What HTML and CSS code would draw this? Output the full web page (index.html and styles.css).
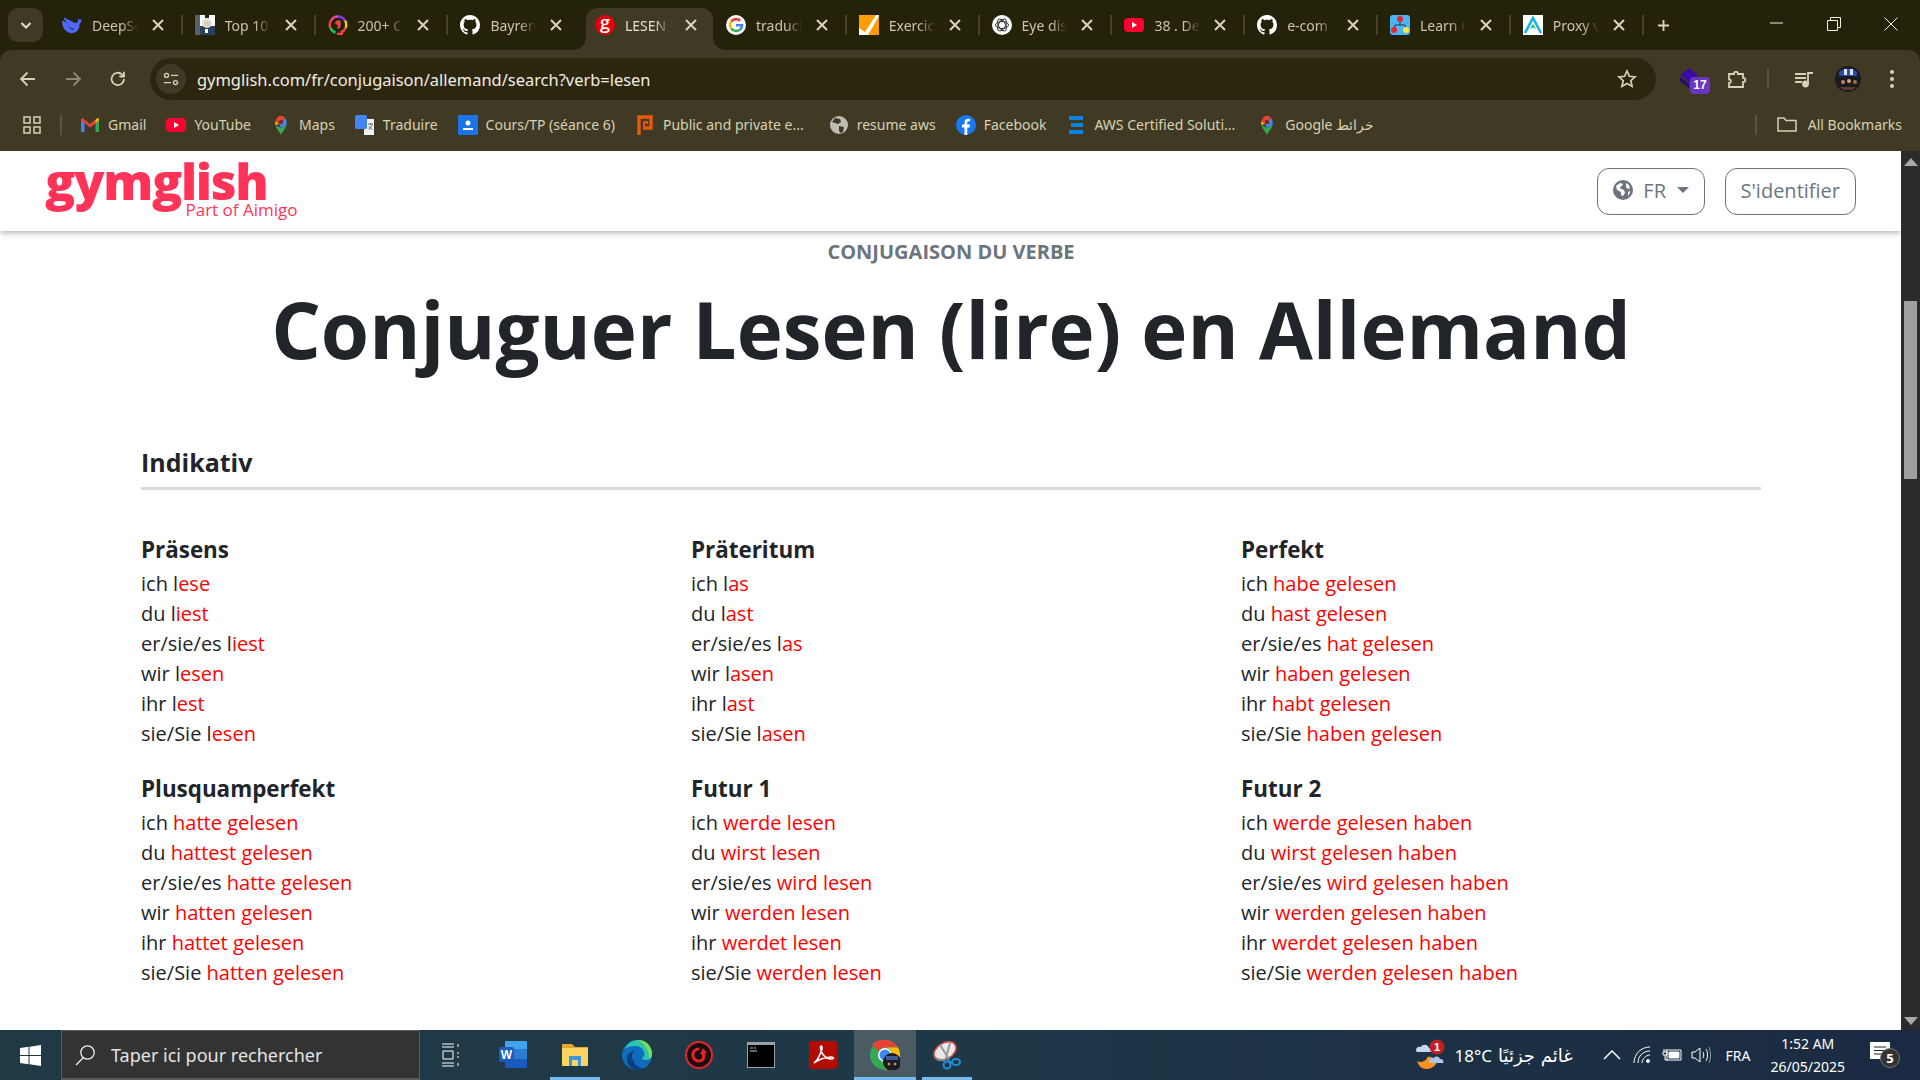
FILE: index.html
```html
<!DOCTYPE html>
<html lang="fr">
<head>
    <meta charset="UTF-8">
    <meta name="viewport" content="width=device-width, initial-scale=1.0">
    <title>LESEN</title>
    <link rel="stylesheet" href="styles.css">
</head>
<body>
    <svg class="sprite" aria-hidden="true">
        <symbol id="i-github" viewBox="0 0 16 16"><circle cx="8" cy="8" r="8" fill="#25220a"/><path fill="#fff" d="M8 0C3.58 0 0 3.58 0 8c0 3.54 2.29 6.53 5.47 7.59.4.07.55-.17.55-.38 0-.19-.01-.82-.01-1.49-2.01.37-2.53-.49-2.69-.94-.09-.23-.48-.94-.82-1.13-.28-.15-.68-.52-.01-.53.63-.01 1.08.58 1.23.82.72 1.21 1.87.87 2.33.66.07-.52.28-.87.51-1.07-1.78-.2-3.64-.89-3.64-3.95 0-.87.31-1.59.82-2.15-.08-.2-.36-1.02.08-2.12 0 0 .67-.21 2.2.82.64-.18 1.32-.27 2-.27.68 0 1.36.09 2 .27 1.53-1.04 2.2-.82 2.2-.82.44 1.1.16 1.92.08 2.12.51.56.82 1.27.82 2.15 0 3.07-1.87 3.75-3.65 3.95.29.25.54.73.54 1.48 0 1.07-.01 1.93-.01 2.2 0 .21.15.46.55.38A8.013 8.013 0 0016 8c0-4.42-3.58-8-8-8z"/></symbol>
        <symbol id="i-yt" viewBox="0 0 20 20"><rect x="0" y="3" width="20" height="14" rx="4" fill="#ff0033"/><path fill="#fff" d="M8 7l5 3-5 3z"/></symbol>
        <symbol id="i-maps" viewBox="0 0 20 20"><path fill="#34a853" d="M10 20c-1-3-5-6.500-5.500-10L10 13l5.500-3C15 13.500 11 17 10 20z"/><path fill="#fbbc04" d="M4.500 10C4 8.500 4 7.500 4.500 6L8 9z"/><path fill="#4285f4" d="M15.500 10C16 7 15.500 5 14 3l-6 6 2 4z"/><path fill="#ea4335" d="M14 3C11.500 -.5 6.500 -.5 4.500 6L8 9z"/><circle cx="10" cy="7" r="2.200" fill="#7a2a1c"/></symbol>
        <symbol id="i-fb" viewBox="0 0 20 20"><circle cx="10" cy="10" r="10" fill="#1877f2"/><path fill="#fff" d="M8.500 20v-7.500H6V9.500h2.500V7.500c0-2.500 1.500-3.800 3.700-3.800 1 0 1.900.1 1.900.1v2.500h-1.200c-1.200 0-1.600.8-1.600 1.500v1.700h2.700l-.4 3h-2.300V20z"/></symbol>
    </svg>

    <div class="tabstrip">
        <button class="tabs-menu" aria-label="Onglets">
            <svg class="ico14" viewBox="0 0 14 14"><path d="M2.500 5l4.500 4.500L11.500 5" fill="none" stroke="#e6e2c8" stroke-width="2"/></svg>
        </button>
        <div class="tab">
            <svg class="fav" viewBox="0 0 20 20"><path fill="#4d6bfe" d="M19.500 4c-.8.500-1.300.3-2 .8-.4-.6-.9-1-1.700-1 .3 1 .2 1.500.2 2.200C15 9 13 8 11 7 8 5.500 5 4 3 2.800 2.500 2.500 2 3 2 3.500c.5 2 2 3 4 4.700-1.500-.5-3-1.200-4.800-2.400C.500 5.500.200 6 .200 6.500c0 1 .3 5 2.300 7.800 2 2.500 5 4.200 8 3.800 3-.3 5-2 6-4.300 1-1.800 1-3.500 1-5 .8-.3 1.800-1.500 2-4.800z"/><path fill="#25220a" d="M6 11c2 1.800 4.500 3 7 2.500-1.800 2-5 1-7-2.500z"/></svg>
            <span class="tab-title">DeepSe</span>
            <svg class="tab-x" viewBox="0 0 14 14"><path d="M2 2l10 10M12 2L2 12"/></svg>
            <i class="tab-sep"></i>
        </div>
        <div class="tab">
            <svg class="fav" viewBox="0 0 20 20"><rect width="20" height="20" fill="#fff"/><rect width="5" height="20" fill="#5b5f63"/><rect x="5" y="11" width="15" height="9" fill="#27415e"/><circle cx="12" cy="8" r="5" fill="#dfe3e6"/><circle cx="12" cy="9" r="3" fill="#e9c8ad"/><rect x="10" y="0" width="4" height="3" fill="#222"/><rect x="10" y="14" width="3" height="4" fill="#fff"/></svg>
            <span class="tab-title">Top 10</span>
            <svg class="tab-x" viewBox="0 0 14 14"><path d="M2 2l10 10M12 2L2 12"/></svg>
            <i class="tab-sep"></i>
        </div>
        <div class="tab">
            <svg class="fav" viewBox="0 0 20 20" fill="none" stroke-width="2.400"><path stroke="#7c3aed" d="M10 1.500a8 8 0 0 1 7 4"/><path stroke="#f5c518" d="M17 5.500a8 8 0 0 1 .5 7.500"/><path stroke="#ef4444" d="M2.500 13a8 8 0 0 1 .5-7.500"/><path stroke="#ec4899" d="M3 5.500a8 8 0 0 1 7-4"/><path stroke="#22c55e" d="M2.500 13a8 8 0 0 0 5 4.500"/><path stroke="#ef4444" d="M17.500 13a8 8 0 0 1-5 4.500M9 19h6"/><path fill="#ef4444" stroke="none" d="M8 6l4-1 1 4-1 4-3 1 1-4-3-1z"/></svg>
            <span class="tab-title">200+ C</span>
            <svg class="tab-x" viewBox="0 0 14 14"><path d="M2 2l10 10M12 2L2 12"/></svg>
            <i class="tab-sep"></i>
        </div>
        <div class="tab">
            <svg class="fav"><use href="#i-github"/></svg>
            <span class="tab-title">Bayren</span>
            <svg class="tab-x" viewBox="0 0 14 14"><path d="M2 2l10 10M12 2L2 12"/></svg>
        </div>
        <div class="tab active">
            <span class="fav fav-g">g</span>
            <span class="tab-title">LESEN</span>
            <svg class="tab-x" viewBox="0 0 14 14"><path d="M2 2l10 10M12 2L2 12"/></svg>
        </div>
        <div class="tab">
            <svg class="fav" viewBox="0 0 20 20"><circle cx="10" cy="10" r="10" fill="#fff"/><g fill="none" stroke-width="2.600"><path stroke="#ea4335" d="M5.300 6.500A6 6 0 0 1 14.200 5.700"/><path stroke="#fbbc04" d="M5.300 6.500a6 6 0 0 0 0 7"/><path stroke="#34a853" d="M5.300 13.500a6 6 0 0 0 9.300.5"/><path stroke="#4285f4" d="M14.600 14c1-1 1.400-2.300 1.400-3.800h-6"/></g></svg>
            <span class="tab-title">traduct</span>
            <svg class="tab-x" viewBox="0 0 14 14"><path d="M2 2l10 10M12 2L2 12"/></svg>
            <i class="tab-sep"></i>
        </div>
        <div class="tab">
            <svg class="fav" viewBox="0 0 20 20"><rect width="20" height="20" fill="#ff9d00"/><path fill="#fff" d="M0 13l6 4L17 0h3v1L9 20H0z"/></svg>
            <span class="tab-title">Exercic</span>
            <svg class="tab-x" viewBox="0 0 14 14"><path d="M2 2l10 10M12 2L2 12"/></svg>
            <i class="tab-sep"></i>
        </div>
        <div class="tab">
            <svg class="fav" viewBox="0 0 20 20"><circle cx="10" cy="10" r="10" fill="#fff"/><g fill="none" stroke="#333" stroke-width="1"><ellipse cx="10" cy="10" rx="6.500" ry="3.500"/><ellipse cx="10" cy="10" rx="6.500" ry="3.500" transform="rotate(60 10 10)"/><ellipse cx="10" cy="10" rx="6.500" ry="3.500" transform="rotate(120 10 10)"/></g></svg>
            <span class="tab-title">Eye dis</span>
            <svg class="tab-x" viewBox="0 0 14 14"><path d="M2 2l10 10M12 2L2 12"/></svg>
            <i class="tab-sep"></i>
        </div>
        <div class="tab">
            <svg class="fav"><use href="#i-yt"/></svg>
            <span class="tab-title">38 . De</span>
            <svg class="tab-x" viewBox="0 0 14 14"><path d="M2 2l10 10M12 2L2 12"/></svg>
            <i class="tab-sep"></i>
        </div>
        <div class="tab">
            <svg class="fav"><use href="#i-github"/></svg>
            <span class="tab-title">e-com</span>
            <svg class="tab-x" viewBox="0 0 14 14"><path d="M2 2l10 10M12 2L2 12"/></svg>
            <i class="tab-sep"></i>
        </div>
        <div class="tab">
            <svg class="fav" viewBox="0 0 20 20"><rect width="20" height="20" rx="3" fill="#4db4f5"/><path d="M10 5v5M4 14l1-4h10l1 4" fill="none" stroke="#234" stroke-width="1"/><circle cx="10" cy="4" r="3" fill="#e8262a"/><circle cx="4" cy="15" r="3" fill="#e8262a"/><circle cx="16" cy="15" r="3" fill="#f5e642"/></svg>
            <span class="tab-title">Learn G</span>
            <svg class="tab-x" viewBox="0 0 14 14"><path d="M2 2l10 10M12 2L2 12"/></svg>
            <i class="tab-sep"></i>
        </div>
        <div class="tab">
            <svg class="fav" viewBox="0 0 20 20"><rect width="20" height="20" fill="#fff"/><path d="M2 18L10 3l8 15" fill="none" stroke="#12b5ea" stroke-width="2.600"/><path fill="#17b978" d="M10 9l3 5-3-1.500L7 14z"/></svg>
            <span class="tab-title">Proxy v</span>
            <svg class="tab-x" viewBox="0 0 14 14"><path d="M2 2l10 10M12 2L2 12"/></svg>
            <i class="tab-sep"></i>
        </div>
        <svg class="tab-new" viewBox="0 0 14 14"><path d="M7 1v12M1 7h12"/></svg>
        <div class="win-controls">
            <span class="win-btn"><svg viewBox="0 0 14 14"><path d="M0 6h13"/></svg></span>
            <span class="win-btn"><svg viewBox="0 0 14 14"><path d="M.500 3.500h10v10H.500zM3.500 3.500v-3h10v10h-3"/></svg></span>
            <span class="win-btn"><svg viewBox="0 0 14 14"><path d="M.500 .500l13 13M13.500 .500l-13 13"/></svg></span>
        </div>
    </div>

    <div class="toolbar">
        <button class="tool-btn" aria-label="Retour"><svg class="tool-ico" viewBox="0 0 20 20"><path d="M17 10H3.500M9.500 3.500L3 10l6.500 6.500"/></svg></button>
        <button class="tool-btn dim" aria-label="Suivant"><svg class="tool-ico" viewBox="0 0 20 20"><path d="M3 10h13.500M10.500 3.500L17 10l-6.500 6.500"/></svg></button>
        <button class="tool-btn" aria-label="Recharger"><svg class="tool-ico" viewBox="0 0 20 20"><path d="M16 10a6.200 6.200 0 1 1-1.800-4.400L16 7.500M16 2.800v4.700h-4.700"/></svg></button>
        <div class="omnibox">
            <span class="site-chip">
                <svg class="tool-ico small" viewBox="0 0 20 20"><circle cx="5" cy="6" r="2.200"/><path d="M10 6h8M2 14h8"/><circle cx="15" cy="14" r="2.200"/></svg>
            </span>
            <span class="url">gymglish.com/fr/conjugaison/allemand/search?verb=lesen</span>
            <svg class="star" viewBox="0 0 20 20"><path d="M10 2l2.400 5.300 5.700.6-4.300 3.800 1.300 5.700L10 14.500l-5.100 2.900 1.300-5.700-4.300-3.800 5.700-.6z"/></svg>
        </div>
        <div class="tool-right">
            <span class="tool-btn ext">
                <svg class="ext-ico" viewBox="0 0 22 20"><path fill="#3a0ca3" d="M11 0l9 7-9 7-9-7z"/><path fill="#240a78" d="M2 9l9 7v4L2 13z"/></svg>
                <span class="ext-badge">17</span>
            </span>
            <span class="tool-btn"><svg class="tool-ico" viewBox="0 0 20 20"><path d="M2 5h5c-.5-3 4.500-3 4 0h5v4c3-.5 3 4.500 0 4v5H2v-4c2.500.5 2.500-4 0-3.500z"/></svg></span>
            <i class="tool-sep"></i>
            <span class="tool-btn"><svg class="tool-ico" viewBox="0 0 20 20"><path d="M1 5h11M1 9h11M1 13h7M14 15V4h5"/><circle cx="11.500" cy="15" r="2.500" fill="#d6d2b4"/></svg></span>
            <span class="tool-btn">
                <svg class="avatar" viewBox="0 0 26 26"><circle cx="13" cy="13" r="13" fill="#1b1a22"/><path fill="#2a49a8" d="M4 6a13 13 0 0 1 18 0v4H4z"/><path fill="#dfe6f5" d="M9 3h3v6H9zM15 3h3v6h-3z"/><circle cx="8" cy="16" r="2" fill="#b98a62"/><circle cx="14" cy="15" r="2" fill="#d8a36a"/><circle cx="20" cy="16" r="2" fill="#a86e42"/><path fill="#5a3a26" d="M5 21h16l-3 3H8z"/></svg>
            </span>
            <span class="tool-btn"><svg class="dots" viewBox="0 0 4 18"><circle cx="2" cy="2" r="2"/><circle cx="2" cy="9" r="2"/><circle cx="2" cy="16" r="2"/></svg></span>
        </div>
    </div>

    <div class="bookmarks">
        <svg class="apps" viewBox="0 0 18 18"><path d="M1 1h6v6H1zM11 1h6v6h-6zM1 11h6v6H1zM11 11h6v6h-6z"/></svg>
        <i class="book-sep"></i>
        <a class="book">
            <svg class="fav" viewBox="0 0 20 20"><path fill="#4285f4" d="M1 5.500v10.500c0 .6.400 1 1 1h2.500V8z"/><path fill="#34a853" d="M19 5.500v10.500c0 .6-.4 1-1 1h-2.500V8z"/><path fill="#ea4335" d="M2.800 3.200L10 9l7.200-5.800 0 4L10 12.500 4.500 8 1 5.500c0-2 1-2.800 1.800-2.300z"/><path fill="#fbbc04" d="M15.500 8V5l1.700-1.800c1-.4 1.800.4 1.800 2.300z"/></svg>
            Gmail
        </a>
        <a class="book"><svg class="fav"><use href="#i-yt"/></svg>YouTube</a>
        <a class="book"><svg class="fav"><use href="#i-maps"/></svg>Maps</a>
        <a class="book">
            <svg class="fav" viewBox="0 0 20 20"><path fill="#f1f3f4" d="M9 4h10v16H9z"/><rect x="0" y="0" width="12" height="14" rx="1.500" fill="#4285f4"/><path d="M13 9h5M15.500 8v2M17 10c-.5 2-2 3.500-3.500 4.500M14 11c.5 1.500 2 3 3.500 3.500" fill="none" stroke="#666" stroke-width="1"/></svg>
            Traduire
        </a>
        <a class="book">
            <svg class="fav" viewBox="0 0 20 20"><rect width="20" height="20" rx="1" fill="#1a73e8"/><circle cx="10" cy="8" r="2.500" fill="#fff"/><path fill="#fff" d="M5 13h10v2H5z"/></svg>
            Cours/TP (séance 6)
        </a>
        <a class="book wide">
            <svg class="fav" viewBox="0 0 20 20"><path d="M4 20V2h12v11H8" fill="none" stroke="#e8590c" stroke-width="3.400"/><path d="M9 12V7h3v2" fill="none" stroke="#e8590c" stroke-width="2"/></svg>
            Public and private e...
        </a>
        <a class="book">
            <svg class="fav" viewBox="0 0 20 20"><circle cx="10" cy="10" r="9" fill="#bdbdb5"/><path fill="#403a25" d="M6 3l5 1 1 3-3 2-3-1-3-1zM10 11l5 1-1 5-3 1-1-3z"/></svg>
            resume aws
        </a>
        <a class="book"><svg class="fav"><use href="#i-fb"/></svg>Facebook</a>
        <a class="book aws">
            <svg class="fav" viewBox="0 0 20 20"><path fill="#0a84e0" d="M3 1h14v4H3zM5 8h12v4H5zM3 15h14v4H3z"/></svg>
            AWS Certified Soluti...
        </a>
        <a class="book"><svg class="fav"><use href="#i-maps"/></svg>Google خرائط</a>
        <i class="book-sep right"></i>
        <a class="book all">
            <svg class="folder" viewBox="0 0 20 15"><path d="M1 1h6l2 2.500h10V14H1z"/></svg>
            All Bookmarks
        </a>
    </div>

    <div class="viewport">
        <div class="page">
            <header class="site-header">
                <a class="logo">
                    <span class="logo-main">gymglish</span>
                    <span class="logo-sub">Part of Aimigo</span>
                </a>
                <div class="header-btns">
                    <button class="btn-outline">
                        <svg class="globe" viewBox="0 0 20 20"><circle cx="10" cy="10" r="10"/><path fill="#fff" d="M3 6l4-3 3 1-1 2-2 1 1 2 3 1 1 3-2 3-2-1v-3L4 10zM13 3l3 2 1 3-2 1-2-2zM15 12l2-1v2l-2 3z"/></svg>
                        FR
                        <i class="caret"></i>
                    </button>
                    <button class="btn-outline">S'identifier</button>
                </div>
            </header>

            <main class="content">
                <p class="kicker">CONJUGAISON DU VERBE</p>
                <h1>Conjuguer Lesen (lire) en Allemand</h1>

                <h2 class="mood">Indikativ</h2>
                <div class="tenses">
                    <section>
                        <h3>Präsens</h3>
                        <div>ich l<b>ese</b></div>
                        <div>du l<b>iest</b></div>
                        <div>er/sie/es l<b>iest</b></div>
                        <div>wir l<b>esen</b></div>
                        <div>ihr l<b>est</b></div>
                        <div>sie/Sie l<b>esen</b></div>
                    </section>
                    <section>
                        <h3>Präteritum</h3>
                        <div>ich l<b>as</b></div>
                        <div>du l<b>ast</b></div>
                        <div>er/sie/es l<b>as</b></div>
                        <div>wir l<b>asen</b></div>
                        <div>ihr l<b>ast</b></div>
                        <div>sie/Sie l<b>asen</b></div>
                    </section>
                    <section>
                        <h3>Perfekt</h3>
                        <div>ich <b>habe gelesen</b></div>
                        <div>du <b>hast gelesen</b></div>
                        <div>er/sie/es <b>hat gelesen</b></div>
                        <div>wir <b>haben gelesen</b></div>
                        <div>ihr <b>habt gelesen</b></div>
                        <div>sie/Sie <b>haben gelesen</b></div>
                    </section>
                    <section>
                        <h3>Plusquamperfekt</h3>
                        <div>ich <b>hatte gelesen</b></div>
                        <div>du <b>hattest gelesen</b></div>
                        <div>er/sie/es <b>hatte gelesen</b></div>
                        <div>wir <b>hatten gelesen</b></div>
                        <div>ihr <b>hattet gelesen</b></div>
                        <div>sie/Sie <b>hatten gelesen</b></div>
                    </section>
                    <section>
                        <h3>Futur 1</h3>
                        <div>ich <b>werde lesen</b></div>
                        <div>du <b>wirst lesen</b></div>
                        <div>er/sie/es <b>wird lesen</b></div>
                        <div>wir <b>werden lesen</b></div>
                        <div>ihr <b>werdet lesen</b></div>
                        <div>sie/Sie <b>werden lesen</b></div>
                    </section>
                    <section>
                        <h3>Futur 2</h3>
                        <div>ich <b>werde gelesen haben</b></div>
                        <div>du <b>wirst gelesen haben</b></div>
                        <div>er/sie/es <b>wird gelesen haben</b></div>
                        <div>wir <b>werden gelesen haben</b></div>
                        <div>ihr <b>werdet gelesen haben</b></div>
                        <div>sie/Sie <b>werden gelesen haben</b></div>
                    </section>
                </div>
            </main>
        </div>
        <div class="scrollbar">
            <i class="arrow-up"></i>
            <i class="thumb"></i>
            <i class="arrow-down"></i>
        </div>
    </div>

    <footer class="taskbar">
        <div class="start">
            <svg viewBox="0 0 21 21"><path fill="#fff" d="M0 3l8.500-1.200V10H0zM9.500 1.700L21 0v10H9.500zM0 11h8.500v8.200L0 18zM9.500 11H21v10L9.500 19.300z"/></svg>
        </div>
        <div class="search">
            <svg viewBox="0 0 22 22"><circle cx="13.500" cy="8.500" r="6.700"/><path d="M9 14L2 21"/></svg>
            <span>Taper ici pour rechercher</span>
        </div>
        <div class="task-item">
            <svg class="task-view" viewBox="0 0 20 24"><path d="M1 1h12M1 4h12M1 20h12M1 23h12M2 8h10v8H2zM17 1v3M17 9v2M17 13v2M17 20v3"/></svg>
        </div>
        <div class="task-item">
            <svg class="task-ico" viewBox="0 0 30 30"><path fill="#41a5ee" d="M8 1h20a1 1 0 0 1 1 1v7H7V2a1 1 0 0 1 1-1z"/><path fill="#2b7cd3" d="M7 9h22v10H7z"/><path fill="#185abd" d="M7 19h22v8a1 1 0 0 1-1 1H8a1 1 0 0 1-1-1z"/><rect x="1" y="7" width="15" height="15" rx="1.500" fill="#1a5cb8"/><text x="8.500" y="19" class="word-w">W</text></svg>
        </div>
        <div class="task-item open">
            <svg class="task-ico" viewBox="0 0 30 30"><path fill="#e0a82e" d="M2 4h10l3 3h13v3H2z"/><path fill="#fcd462" d="M2 8h26v17a1 1 0 0 1-1 1H3a1 1 0 0 1-1-1z"/><path fill="#3a96dd" d="M9 16h12v10h-3v-6h-6v6H9z"/></svg>
        </div>
        <div class="task-item">
            <svg class="task-ico" viewBox="0 0 30 30"><circle cx="15" cy="15" r="15" fill="#0f6cbd"/><path fill="#2ec4a6" d="M3 9C6 2 12 0 16 0c8 0 14 6 14 14 0 4-3 6-6 6-2 0-4-1-4-2 2-1 3-3 2-6-1-4-5-6-9-6-4 0-8 1-10 3z"/><path fill="#7bdc5a" d="M16 0c8 0 14 6 14 14 0 2-1 4-3 5 1-6-3-15-11-19z"/><path fill="#0a3f7a" d="M11 20c-2-3-1-7 2-9-5 0-9 4-8 10 1 5 6 9 11 9 2 0 4-1 6-2-5 1-9-3-11-8z"/></svg>
        </div>
        <div class="task-item">
            <svg class="task-ico" viewBox="0 0 30 30"><circle cx="15" cy="15" r="13" fill="#1a0d0d" stroke="#e3242b" stroke-width="2"/><path fill="none" stroke="#e3242b" stroke-width="3" d="M15 9a6 6 0 1 0 5 9"/><path fill="#e3242b" d="M16 14l3-6 4 5-2 .5V18h-3v-3.500z"/></svg>
        </div>
        <div class="task-item">
            <svg class="task-ico" viewBox="0 0 30 30"><rect x="1" y="2" width="28" height="26" fill="#9aa0a3"/><rect x="2" y="5" width="26" height="22" fill="#000"/><path d="M4 8h3M8 8h2M4 11h7" stroke="#ccc" stroke-width="1"/></svg>
        </div>
        <div class="task-item">
            <svg class="task-ico" viewBox="0 0 30 30"><rect x="1" y="1" width="28" height="28" rx="3" fill="#b30b00"/><path fill="none" stroke="#fff" stroke-width="1.600" d="M6 23c3-2 6-8 8-14 .6-3-1.500-4-1.500-1 0 4 4 11 11 11 3 0 2-2 0-2-5 0-13 2-17.500 6z"/></svg>
        </div>
        <div class="task-item open active">
            <svg class="task-ico" viewBox="0 0 30 30"><circle cx="15" cy="15" r="15" fill="#34a853"/><path fill="#ea4335" d="M15 0a15 15 0 0 1 13 7.500H15a7.500 7.500 0 0 0-6.500 3.750L2 4.500A15 15 0 0 1 15 0z"/><path fill="#fbbc04" d="M28 7.500A15 15 0 0 1 15 30l6.500-11.250A7.500 7.500 0 0 0 15 7.500z"/><circle cx="15" cy="15" r="7" fill="#fff"/><circle cx="15" cy="15" r="5.500" fill="#4285f4"/><circle cx="22" cy="22" r="9" fill="#1a1a20"/><path fill="#3b5a9a" d="M16 16h12v4H16z"/><circle cx="19" cy="24" r="1.500" fill="#b98a62"/><circle cx="25" cy="24" r="1.500" fill="#b98a62"/></svg>
        </div>
        <div class="task-item open">
            <svg class="task-ico" viewBox="0 0 30 30"><ellipse cx="13" cy="11" rx="12" ry="8" transform="rotate(-30 13 11)" fill="#e8e8e8" stroke="#d8403a" stroke-width="1.500"/><path d="M8 5l9 14M18 3L14 18" stroke="#9a9a9a" stroke-width="2"/><path d="M2 15c3 4 8 5 12 3l-1 3c-5 1-10 0-11-6z" fill="#8a8a8a"/><g fill="none" stroke="#1f8fd6" stroke-width="2"><circle cx="15" cy="25" r="3.500"/><ellipse cx="24" cy="22" rx="4" ry="3"/><path d="M17 22l-1-4M20 22l-3 1"/></g></svg>
        </div>

        <div class="tray">
            <svg class="weather" viewBox="0 0 32 32"><path fill="#f7931e" d="M3 22c3 2 8 1 10-3 1-2 4-1 6 0 3 2 4 3 3 6-3 5-10 6-14 4-2-1-4-4-5-7z"/><path fill="#c3d7ee" d="M2 11c0-3 3-4 5-3 1-3 7-3 8 1 3 0 4 2 4 4H4c-2 0-2-1-2-2z"/><path fill="#a9c6e8" d="M15 22c0-3 3-4 5-3 1-2 5-2 6 1 3 0 4 2 3 4H17c-2 0-2-1-2-2z"/><circle cx="23" cy="8" r="7.500" fill="#c4201d"/><text x="23" y="12" class="weather-n">1</text></svg>
            <span class="temp">18°C</span>
            <span class="temp-ar">غائم جزئيًا</span>
            <svg class="tray-ico chev" viewBox="0 0 18 12"><path d="M1 10l8-8 8 8"/></svg>
            <svg class="tray-ico wifi" viewBox="0 0 18 18"><path d="M1 17C1 8 8 1 17 1M5 17c0-7 5-12 12-12M9 17c0-4 4-8 8-8"/><circle cx="15" cy="15" r="1.500" fill="#fff"/></svg>
            <svg class="tray-ico batt" viewBox="0 0 20 14"><path d="M5 2h14v10H5z"/><path fill="#fff" d="M7 4h10v6H7z"/><path d="M2 1v3M4 1v3M1 4h4v3H1zM3 7v5h3"/></svg>
            <svg class="tray-ico vol" viewBox="0 0 20 18"><path d="M1 6h3l5-4v14l-5-4H1zM12 6c1 2 1 4 0 6M15 3c2 3 2 9 0 12"/><path d="M18 1c2 5 2 11 0 16" opacity=".5"/></svg>
            <span class="lang">FRA</span>
            <div class="clock">
                <span>1:52 AM</span>
                <span>26/05/2025</span>
            </div>
            <div class="notif">
                <svg viewBox="0 0 20 18"><path fill="#fff" d="M0 0h20v17H0z"/><path d="M4 5h12M4 8.500h12M4 12h9" stroke="#222" stroke-width="1.200"/></svg>
                <span class="notif-count">5</span>
            </div>
        </div>
    </footer>
</body>
</html>
```

FILE: styles.css
```css
* {
    box-sizing: border-box;
}
html, body {
    margin: 0;
    height: 100%;
}
body {
    width: 1920px;
    height: 1080px;
    display: flex;
    flex-direction: column;
    overflow: hidden;
    background-color: #25220a;
    font-family: "Noto Sans", sans-serif;
}
.sprite {
    display: none;
}
button {
    font-family: inherit;
    background: none;
    border: none;
    padding: 0;
}

/* browser tabs */
.tabstrip {
    height: 50px;
    display: flex;
    align-items: flex-start;
    padding: 8px 0 0 8px;
    flex-shrink: 0;
}
.tabs-menu {
    width: 35px;
    height: 34px;
    margin-right: 7px;
    border-radius: 10px;
    background-color: #403a25;
    display: flex;
    align-items: center;
    justify-content: center;
}
.ico14 {
    width: 14px;
    height: 14px;
}
.tab {
    position: relative;
    width: 132.800px;
    height: 42px;
    display: flex;
    align-items: center;
    padding: 0 0 8px 12px;
    color: #c9c5a5;
    font-size: 14px;
}
.tab.active {
    width: 127px;
    margin: 0 1px 0 4.800px;
    padding-left: 9px;
    background-color: #403a25;
    border-radius: 12px 12px 0 0;
    color: #e3dfc8;
}
.tab.active::before, .tab.active::after {
    content: "";
    position: absolute;
    bottom: 0;
    width: 12px;
    height: 12px;
}
.tab.active::before {
    left: -12px;
    background: radial-gradient(circle at 0 0, transparent 11.500px, #403a25 12px);
}
.tab.active::after {
    right: -12px;
    background: radial-gradient(circle at 100% 0, transparent 11.500px, #403a25 12px);
}
.fav {
    width: 20px;
    height: 20px;
    flex-shrink: 0;
}
.fav-g {
    border-radius: 50%;
    background-color: #e6000a;
    color: #fff;
    font-family: "Open Sans", sans-serif;
    font-size: 18px;
    font-weight: 600;
    line-height: 15px;
    text-align: center;
}
.tab-title {
    width: 46px;
    margin: 0 13px 0 10px;
    overflow: hidden;
    white-space: nowrap;
    -webkit-mask-image: linear-gradient(90deg, #000 65%, transparent);
    mask-image: linear-gradient(90deg, #000 65%, transparent);
}
.tab-x {
    width: 14px;
    height: 14px;
    fill: none;
    stroke: #d9d5b8;
    stroke-width: 2;
    flex-shrink: 0;
}
.tab-sep {
    width: 2px;
    height: 20px;
    margin-left: 16px;
    background-color: #46422a;
}
.tab-new {
    width: 13px;
    height: 13px;
    margin: 11px 0 0 13px;
    fill: none;
    stroke: #d9d5b8;
    stroke-width: 2;
}
.win-controls {
    margin: -8px 1px 0 auto;
    display: flex;
}
.win-btn {
    width: 57px;
    height: 48px;
    display: flex;
    align-items: center;
    justify-content: center;
}
.win-btn svg {
    width: 14px;
    height: 14px;
    fill: none;
    stroke: #f0eee0;
    stroke-width: 1;
}

/* address bar */
.toolbar {
    height: 58px;
    display: flex;
    align-items: center;
    padding-left: 5px;
    background-color: #403a25;
    border-radius: 12px 12px 0 0;
    flex-shrink: 0;
}
.tool-btn {
    position: relative;
    width: 45px;
    height: 42px;
    display: flex;
    align-items: center;
    justify-content: center;
    flex-shrink: 0;
}
.tool-ico {
    width: 20px;
    height: 20px;
    fill: none;
    stroke: #d6d2b4;
    stroke-width: 1.800;
}
.tool-ico.small {
    width: 18px;
    height: 18px;
    stroke-width: 1.500;
}
.tool-btn.dim .tool-ico {
    stroke: #8c8870;
}
.omnibox {
    flex: 1;
    height: 42px;
    margin-left: 10px;
    padding-left: 6px;
    display: flex;
    align-items: center;
    background-color: #2c260f;
    border-radius: 21px;
}
.site-chip {
    width: 30px;
    height: 30px;
    border-radius: 50%;
    background-color: #403a25;
    display: flex;
    align-items: center;
    justify-content: center;
}
.url {
    margin-left: 11px;
    padding-top: 1px;
    color: #f0eee0;
    font-size: 16.450px;
}
.star {
    width: 20px;
    height: 20px;
    margin: 0 19px 0 auto;
    fill: none;
    stroke: #d6d2b4;
    stroke-width: 1.700;
}
.tool-right {
    display: flex;
    align-items: center;
    padding: 0 6px 0 15px;
}
.tool-right .tool-btn {
    width: 44px;
}
.ext-ico {
    width: 22px;
    height: 20px;
    margin: -3px 8px 0 0;
}
.ext-badge {
    position: absolute;
    left: 19px;
    top: 19px;
    width: 20px;
    height: 17px;
    border-radius: 4px;
    background-color: #6a35c4;
    color: #fff;
    font-family: "Liberation Sans", sans-serif;
    font-size: 12px;
    font-weight: 700;
    line-height: 17px;
    text-align: center;
}
.tool-sep {
    width: 2px;
    height: 20px;
    margin: 0 13px 0 8px;
    background-color: #5c5638;
}
.avatar {
    width: 26px;
    height: 26px;
}
.dots {
    width: 4px;
    height: 18px;
    fill: #d6d2b4;
}

/* bookmarks */
.bookmarks {
    height: 43px;
    display: flex;
    align-items: center;
    padding: 0 18px 10px 23px;
    background-color: #403a25;
    color: #d6d2b4;
    font-size: 14px;
    flex-shrink: 0;
}
.apps {
    width: 18px;
    height: 18px;
    fill: none;
    stroke: #d6d2b4;
    stroke-width: 1.500;
}
.book-sep {
    width: 2px;
    height: 20px;
    margin: 0 18px 0 19px;
    background-color: #5c5638;
}
.book-sep.right {
    margin: 0 20px 0 auto;
}
.book {
    display: flex;
    align-items: center;
    gap: 8px;
    margin-right: 20px;
    white-space: nowrap;
}
.book.wide {
    margin-right: 25px;
}
.book.aws {
    margin-right: 22px;
}
.book.all {
    margin-right: 0;
    gap: 11px;
}
.folder {
    width: 20px;
    height: 15px;
    fill: none;
    stroke: #d6d2b4;
    stroke-width: 1.500;
}

/* page */
.viewport {
    flex: 1;
    display: flex;
    min-height: 0;
    background-color: #fff;
}
.page {
    flex: 1;
    overflow: hidden;
    font-family: "Open Sans", sans-serif;
    color: #212529;
}
.site-header {
    height: 80px;
    padding: 0 45px;
    display: flex;
    align-items: center;
    justify-content: space-between;
    background-color: #fff;
    box-shadow: 0 2px 6px rgba(0, 0, 0, 0.3);
}
.logo {
    display: flex;
    flex-direction: column;
    color: #ff3358;
}
.logo-main {
    font-size: 50px;
    font-weight: 800;
    line-height: 38px;
    letter-spacing: -1.300px;
}
.logo-sub {
    align-self: flex-end;
    margin-right: -30px;
    font-size: 17px;
    line-height: 20px;
}
.header-btns {
    display: flex;
    gap: 20px;
}
.btn-outline {
    height: 47px;
    padding: 0 15px 2px;
    display: flex;
    align-items: center;
    gap: 10.500px;
    border: 1px solid #6c757d;
    border-radius: 12px;
    background-color: #fff;
    color: #6c757d;
    font-family: "Open Sans", sans-serif;
    font-size: 20px;
}
.globe {
    width: 20px;
    height: 20px;
    fill: #6c757d;
}
.caret {
    width: 0;
    height: 0;
    border-left: 6px solid transparent;
    border-right: 6px solid transparent;
    border-top: 6px solid #6c757d;
}
.content {
    padding: 0 140px 0 141px;
}
.kicker {
    margin: 9px 0 0;
    color: #6c757d;
    font-size: 20px;
    font-weight: 700;
    line-height: 24px;
    text-align: center;
}
h1 {
    margin: 22px 0 0;
    font-size: 78px;
    font-weight: 700;
    line-height: 86px;
    text-align: center;
}
.mood {
    margin: 74px 0 0;
    padding-bottom: 9px;
    border-bottom: 3px solid #dcdcd8;
    font-size: 25px;
    font-weight: 700;
    line-height: 32px;
}
.tenses {
    display: grid;
    grid-template-columns: 550px 550px 520px;
    margin-top: 44px;
}
.tenses section {
    margin-bottom: 24px;
    font-size: 20px;
    line-height: 30px;
}
.tenses h3 {
    margin: 0 0 4px;
    padding-top: 1px;
    font-size: 22.400px;
    font-weight: 700;
    line-height: 30px;
}
.tenses b {
    color: #f00;
    font-weight: 400;
}

/* scrollbar */
.scrollbar {
    width: 19px;
    display: flex;
    flex-direction: column;
    align-items: center;
    background-color: #2b2b2b;
}
.arrow-up, .arrow-down {
    width: 0;
    height: 0;
    border-left: 7px solid transparent;
    border-right: 7px solid transparent;
}
.arrow-up {
    margin-top: 7px;
    border-bottom: 8px solid #a8a8a8;
}
.arrow-down {
    margin-top: auto;
    margin-bottom: 5px;
    border-top: 8px solid #a8a8a8;
}
.thumb {
    width: 13px;
    height: 178px;
    margin-top: 135px;
    background-color: #9f9f9f;
}

/* windows taskbar */
.taskbar {
    height: 50px;
    display: flex;
    align-items: stretch;
    background: linear-gradient(90deg, #1f3a45, #1f3848 50%, #1a2a42);
    color: #fff;
    flex-shrink: 0;
}
.start {
    width: 61px;
    display: flex;
    align-items: center;
    justify-content: center;
}
.start svg {
    width: 21px;
    height: 21px;
}
.search {
    width: 359px;
    display: flex;
    align-items: center;
    gap: 15px;
    padding-left: 12px;
    background-color: #333;
    border: 1px solid #5a5a5a;
    border-bottom-width: 2px;
    color: #e4e4e4;
    font-size: 18px;
}
.search svg {
    width: 22px;
    height: 22px;
    fill: none;
    stroke: #f0f0f0;
    stroke-width: 1.300;
}
.task-item {
    position: relative;
    width: 62px;
    display: flex;
    align-items: center;
    justify-content: center;
}
.task-item.active {
    background-color: #4a5b64;
}
.task-item.open::after {
    content: "";
    position: absolute;
    left: 6px;
    right: 6px;
    bottom: 0;
    height: 3px;
    background-color: #76b9ed;
}
.task-item.active::after {
    left: 0;
    right: 0;
}
.task-ico {
    width: 30px;
    height: 30px;
}
.task-view {
    width: 20px;
    height: 24px;
    fill: none;
    stroke: #fff;
    stroke-width: 1;
}
.word-w {
    fill: #fff;
    font-family: "Liberation Sans", sans-serif;
    font-size: 12px;
    font-weight: 700;
    text-anchor: middle;
}
.tray {
    margin-left: auto;
    display: flex;
    align-items: center;
    padding-right: 20px;
}
.weather {
    width: 32px;
    height: 32px;
    margin-right: 9px;
}
.weather-n {
    fill: #fff;
    font-family: "Liberation Sans", sans-serif;
    font-size: 11px;
    font-weight: 700;
    text-anchor: middle;
}
.temp {
    font-size: 17px;
}
.temp-ar {
    margin-left: 6px;
    font-family: "DejaVu Sans", sans-serif;
    font-size: 18px;
}
.tray-ico {
    fill: none;
    stroke: #fff;
    stroke-width: 1;
}
.chev {
    width: 18px;
    height: 12px;
    margin-left: 30px;
    stroke-width: 1.500;
}
.wifi {
    width: 18px;
    height: 18px;
    margin-left: 12px;
}
.batt {
    width: 20px;
    height: 14px;
    margin-left: 11px;
}
.vol {
    width: 20px;
    height: 18px;
    margin-left: 9px;
}
.lang {
    margin-left: 15px;
    font-size: 14px;
}
.clock {
    margin-left: 20px;
    display: flex;
    flex-direction: column;
    align-items: center;
    font-size: 14px;
    line-height: 23px;
}
.notif {
    position: relative;
    width: 30px;
    height: 26px;
    margin-left: 25px;
}
.notif svg {
    width: 20px;
    height: 18px;
}
.notif-count {
    position: absolute;
    right: 0;
    bottom: 0;
    width: 20px;
    height: 20px;
    border-radius: 50%;
    border: 1px solid #777;
    background-color: #333;
    font-size: 13px;
    font-weight: 700;
    line-height: 18px;
    text-align: center;
}
```
